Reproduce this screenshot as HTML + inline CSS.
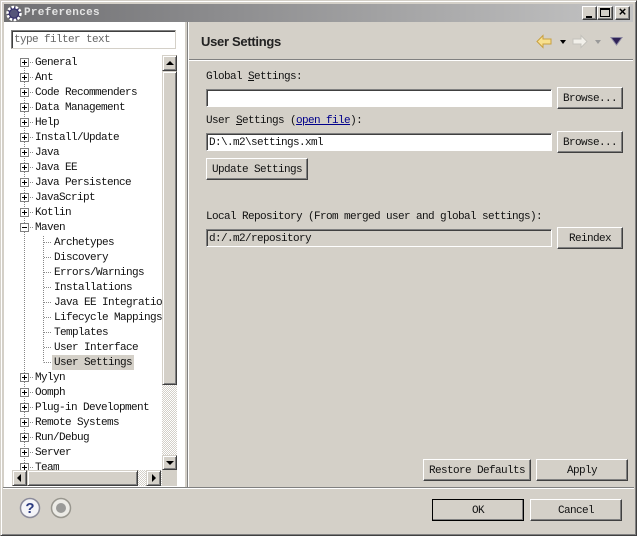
<!DOCTYPE html>
<html><head><meta charset="utf-8">
<style>
html,body{margin:0;padding:0}
body{width:637px;height:536px;overflow:hidden;position:relative;background:#d4d0c8;font-family:"Liberation Mono",monospace;font-size:11px;letter-spacing:-.6px;color:#111}
div,span.a{position:absolute;box-sizing:border-box}
.t{white-space:pre;height:15px;line-height:15px;margin-top:1px}
.b{background:#d4d0c8;border:1px solid;border-color:#fff #404040 #404040 #fff;box-shadow:inset -1px -1px 0 #808080;text-align:center;white-space:pre;padding-top:1px}
.f{border:1px solid;border-color:#808080 #fff #fff #808080;box-shadow:inset 1px 1px 0 #404040;background:#fff;white-space:pre;padding:2px 0 0 2px}
.s{background:#d4d0c8;border:1px solid;border-color:#d4d0c8 #404040 #404040 #d4d0c8;box-shadow:inset 1px 1px 0 #fff,inset -1px -1px 0 #808080;padding:0}
.h{background-color:#e8e6e0;background-image:repeating-conic-gradient(#fff 0 25%,#d4d0c8 0 50%);background-size:2px 2px}
u{text-underline-offset:1px}
</style></head><body>
<div style="left:0;top:0;width:637px;height:536px;border:1px solid;border-color:#d4d0c8 #404040 #404040 #d4d0c8;box-shadow:inset 1px 1px 0 #fff,inset -1px -1px 0 #808080"></div>
<div style="left:4px;top:4px;width:629px;height:18px;background:linear-gradient(90deg,#6f6f72,#c4c4c4)"></div>
<svg style="position:absolute;left:4px;top:4px" width="20" height="19" viewBox="0 0 20 19"><circle cx="10" cy="9.500" r="6.500" fill="#35306a" stroke="#fff" stroke-width="2.500" stroke-dasharray="2.500 1.500"/><circle cx="10" cy="9.500" r="4" fill="#55557a"/></svg>
<div class="t" style="left:24px;top:5px;color:#e4e4e4;font-weight:bold;letter-spacing:.3px">Preferences</div>
<div class="b" style="left:582px;top:6px;width:15px;height:14px"><div style="left:3px;top:9px;width:6px;height:2px;background:#000"></div></div>
<div class="b" style="left:597px;top:6px;width:16px;height:14px"><div style="left:2px;top:1px;width:10px;height:9px;border:1px solid #000;border-top-width:2px"></div></div>
<div class="b" style="left:615px;top:6px;width:15px;height:14px;font-size:13px;line-height:10px;letter-spacing:0;color:#000;font-weight:bold">×</div>

<div style="left:4px;top:22px;width:181px;height:465px;background:#fff"></div>
<div style="left:185px;top:22px;width:2px;height:465px;background:#d4d0c8"></div>
<div style="left:187px;top:22px;width:1px;height:465px;background:#808080"></div>
<div style="left:188px;top:22px;width:1px;height:465px;background:#fff"></div>
<div style="left:3px;top:487px;width:631px;height:1px;background:#808080"></div>
<div style="left:3px;top:488px;width:631px;height:1px;background:#fff"></div>

<div class="f" style="left:11px;top:30px;width:165px;height:19px;line-height:15px;color:#666;border-color:#808080 #d4d0c8 #d4d0c8 #808080">type filter text</div>

<svg style="position:absolute;left:0;top:0" width="180" height="470">
<g stroke="#888" stroke-dasharray="1 1" fill="none">
<path d="M24.5 62V470M43.5 236V362.5"/>
<path d="M28 62.5H34M28 77.5H34M28 92.5H34M28 107.5H34M28 122.5H34M28 137.5H34M28 152.5H34M28 167.5H34M28 182.5H34M28 197.5H34M28 212.5H34M28 227.5H34M28 377.5H34M28 392.5H34M28 407.5H34M28 422.5H34M28 437.5H34M28 452.5H34M28 467.5H34"/>
<path d="M44 242.5H52M44 257.5H52M44 272.5H52M44 287.5H52M44 302.5H52M44 317.5H52M44 332.5H52M44 347.5H52M44 362.5H52"/>
</g>
<g fill="#fff" stroke="#808080"><rect x="20.5" y="58.5" width="8" height="8"/><rect x="20.5" y="73.5" width="8" height="8"/><rect x="20.5" y="88.5" width="8" height="8"/><rect x="20.5" y="103.5" width="8" height="8"/><rect x="20.5" y="118.5" width="8" height="8"/><rect x="20.5" y="133.5" width="8" height="8"/><rect x="20.5" y="148.5" width="8" height="8"/><rect x="20.5" y="163.5" width="8" height="8"/><rect x="20.5" y="178.5" width="8" height="8"/><rect x="20.5" y="193.5" width="8" height="8"/><rect x="20.5" y="208.5" width="8" height="8"/><rect x="20.5" y="223.5" width="8" height="8"/><rect x="20.5" y="373.5" width="8" height="8"/><rect x="20.5" y="388.5" width="8" height="8"/><rect x="20.5" y="403.5" width="8" height="8"/><rect x="20.5" y="418.5" width="8" height="8"/><rect x="20.5" y="433.5" width="8" height="8"/><rect x="20.5" y="448.5" width="8" height="8"/><rect x="20.5" y="463.5" width="8" height="8"/></g>
<path stroke="#000" fill="none" d="M22 62.500H27M24.500 60V65M22 77.500H27M24.500 75V80M22 92.500H27M24.500 90V95M22 107.500H27M24.500 105V110M22 122.500H27M24.500 120V125M22 137.500H27M24.500 135V140M22 152.500H27M24.500 150V155M22 167.500H27M24.500 165V170M22 182.500H27M24.500 180V185M22 197.500H27M24.500 195V200M22 212.500H27M24.500 210V215M22 227.500H27M22 377.500H27M24.500 375V380M22 392.500H27M24.500 390V395M22 407.500H27M24.500 405V410M22 422.500H27M24.500 420V425M22 437.500H27M24.500 435V440M22 452.500H27M24.500 450V455M22 467.500H27M24.500 465V470"/>
</svg>

<div class="t" style="left:35px;top:55px">General</div>
<div class="t" style="left:35px;top:70px">Ant</div>
<div class="t" style="left:35px;top:85px">Code Recommenders</div>
<div class="t" style="left:35px;top:100px">Data Management</div>
<div class="t" style="left:35px;top:115px">Help</div>
<div class="t" style="left:35px;top:130px">Install/Update</div>
<div class="t" style="left:35px;top:145px">Java</div>
<div class="t" style="left:35px;top:160px">Java EE</div>
<div class="t" style="left:35px;top:175px">Java Persistence</div>
<div class="t" style="left:35px;top:190px">JavaScript</div>
<div class="t" style="left:35px;top:205px">Kotlin</div>
<div class="t" style="left:35px;top:220px">Maven</div>
<div class="t" style="left:54px;top:235px">Archetypes</div>
<div class="t" style="left:54px;top:250px">Discovery</div>
<div class="t" style="left:54px;top:265px">Errors/Warnings</div>
<div class="t" style="left:54px;top:280px">Installations</div>
<div class="t" style="left:54px;top:295px;width:108px;overflow:hidden">Java EE Integration</div>
<div class="t" style="left:54px;top:310px;width:108px;overflow:hidden">Lifecycle Mappings</div>
<div class="t" style="left:54px;top:325px">Templates</div>
<div class="t" style="left:54px;top:340px">User Interface</div>
<div style="left:52px;top:355px;width:82px;height:15px;background:#d4d0c8"></div>
<div class="t" style="left:54px;top:355px">User Settings</div>
<div class="t" style="left:35px;top:370px">Mylyn</div>
<div class="t" style="left:35px;top:385px">Oomph</div>
<div class="t" style="left:35px;top:400px">Plug-in Development</div>
<div class="t" style="left:35px;top:415px">Remote Systems</div>
<div class="t" style="left:35px;top:430px">Run/Debug</div>
<div class="t" style="left:35px;top:445px">Server</div>
<div class="t" style="left:35px;top:460px;height:10px;overflow:hidden">Team</div>

<div class="h" style="left:162px;top:55px;width:15px;height:415px"></div>
<div class="s" style="left:162px;top:55px;width:15px;height:16px"><div style="left:3px;top:5px;width:0;height:0;border:4px solid transparent;border-bottom-color:#000;border-top:0"></div></div>
<div class="s" style="left:162px;top:71px;width:15px;height:314px"></div>
<div class="s" style="left:162px;top:455px;width:15px;height:15px"><div style="left:3px;top:5px;width:0;height:0;border:4px solid transparent;border-top-color:#000;border-bottom:0"></div></div>
<div class="h" style="left:12px;top:470px;width:150px;height:16px"></div>
<div class="s" style="left:12px;top:470px;width:15px;height:16px"><div style="left:4px;top:3px;width:0;height:0;border:4px solid transparent;border-right-color:#000;border-left:0"></div></div>
<div class="s" style="left:27px;top:470px;width:111px;height:16px"></div>
<div class="s" style="left:146px;top:470px;width:15px;height:16px"><div style="left:5px;top:3px;width:0;height:0;border:4px solid transparent;border-left-color:#000;border-right:0"></div></div>
<div style="left:162px;top:470px;width:15px;height:16px;background:#d4d0c8"></div>

<div class="t" style="left:201px;top:33px;font-family:'Liberation Sans',sans-serif;font-size:13px;letter-spacing:-.3px;font-weight:bold;color:#222">User Settings</div>
<svg style="position:absolute;left:530px;top:30px" width="100" height="22" viewBox="0 0 100 22">
<path d="M7 11.500L13 5.500V9H21V14H13V17.500Z" fill="#f8e08e" stroke="#c9a040"/>
<path d="M30 10H36L33 14Z" fill="#000"/>
<path d="M57 11.500L51 5.500V9H43V14H51V17.500Z" fill="#f2f0ea" stroke="#c4c2bc"/>
<path d="M65 10H71L68 14Z" fill="#999"/>
<path d="M81 7.500H92L86.500 15Z" fill="#2f2358" stroke="#8a86a0"/>
</svg>
<div style="left:189px;top:59px;width:444px;height:1px;background:#808080"></div>
<div style="left:189px;top:60px;width:444px;height:1px;background:#fff"></div>

<div class="t" style="left:206px;top:69px">Global <u>S</u>ettings:</div>
<div class="f" style="left:206px;top:89px;width:346px;height:18px"></div>
<div class="b" style="left:557px;top:87px;width:66px;height:22px;line-height:20px">Browse...</div>
<div class="t" style="left:206px;top:113px">User <u>S</u>ettings (<u style="color:#00008b">open file</u>):</div>
<div class="f" style="left:206px;top:133px;width:346px;height:18px;line-height:14px">D:\.m2\settings.xml</div>
<div class="b" style="left:557px;top:131px;width:66px;height:22px;line-height:20px">Browse...</div>
<div class="b" style="left:206px;top:158px;width:102px;height:22px;line-height:20px">Update Settings</div>
<div class="t" style="left:206px;top:209px">Local Repository (From merged user and global settings):</div>
<div class="f" style="left:206px;top:229px;width:346px;height:18px;line-height:14px;background:#d4d0c8">d:/.m2/repository</div>
<div class="b" style="left:557px;top:227px;width:66px;height:22px;line-height:20px">Reindex</div>
<div class="b" style="left:423px;top:459px;width:108px;height:22px;line-height:20px">Restore Defaults</div>
<div class="b" style="left:536px;top:459px;width:92px;height:22px;line-height:20px">Apply</div>

<svg style="position:absolute;left:18px;top:496px" width="56" height="24" viewBox="0 0 56 24">
<circle cx="12" cy="12" r="9.500" fill="#f4f4f8" stroke="#8a8a9a" stroke-width="1.500"/>
<text x="12" y="17" text-anchor="middle" font-family="Liberation Sans" font-size="15" font-weight="bold" fill="#2b3a80" letter-spacing="0">?</text>
<circle cx="43" cy="12" r="9.500" fill="#ecebe6" stroke="#98968e" stroke-width="1.500"/>
<circle cx="43" cy="12" r="5" fill="#9a9a98"/>
</svg>
<div class="b" style="left:432px;top:499px;width:92px;height:22px;line-height:20px;outline:1px solid #000;outline-offset:-1px">OK</div>
<div class="b" style="left:530px;top:499px;width:92px;height:22px;line-height:20px">Cancel</div>
</body></html>
